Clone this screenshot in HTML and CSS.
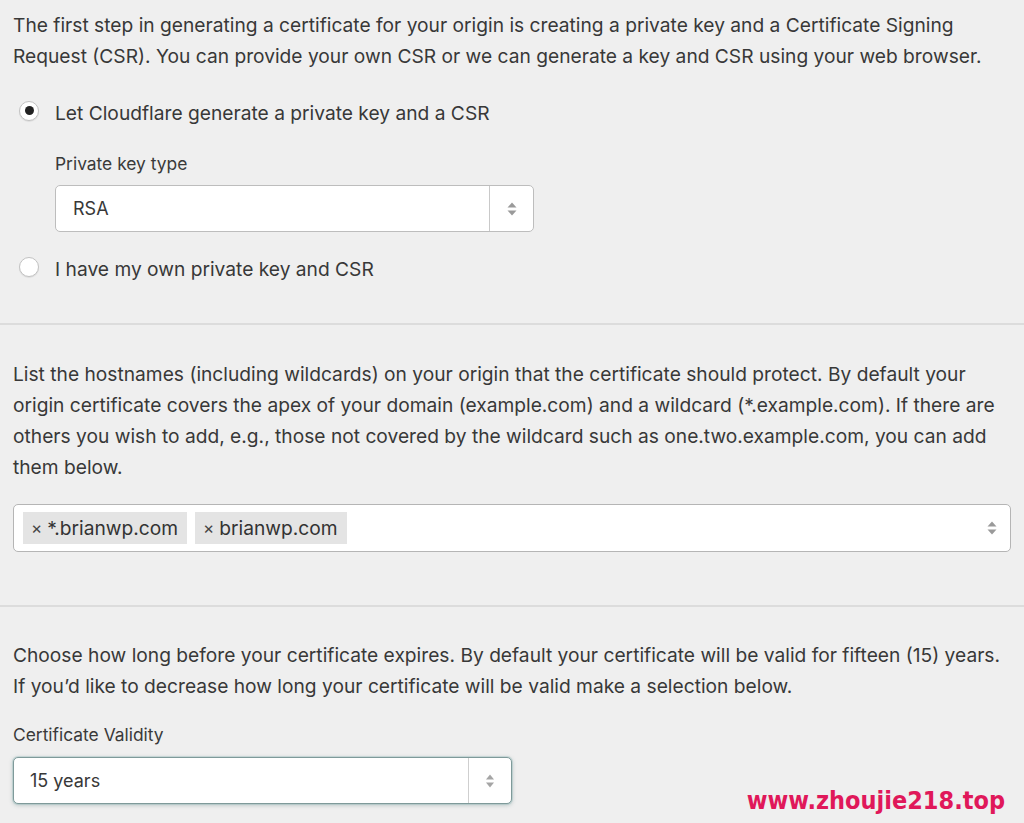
FILE: index.html
```html
<!DOCTYPE html>
<html lang="en">
<head>
<meta charset="utf-8">
<title>Origin Certificate</title>
<link rel="stylesheet" href="styles.css">
</head>
<body>
<div class="page">
  <section class="section first">
    <p class="text">The first step in generating a certificate for your origin is creating a private key and a Certificate Signing Request (CSR). You can provide your own CSR or we can generate a key and CSR using your web browser.</p>
    <div class="radio-row checked-row">
      <span class="radio checked"></span>
      <span class="radio-label">Let Cloudflare generate a private key and a CSR</span>
    </div>
    <div class="sub-field">
      <div class="label">Private key type</div>
      <div class="select key-select">
        <span class="select-value">RSA</span>
        <span class="select-arrows"><svg width="12" height="18" viewBox="0 0 12 18"><path d="M1.5 7.5 L6 2.5 L10.5 7.5 Z" fill="#9a9a9a"/><path d="M1.5 10.5 L6 15.5 L10.5 10.5 Z" fill="#9a9a9a"/></svg></span>
      </div>
    </div>
    <div class="radio-row">
      <span class="radio"></span>
      <span class="radio-label">I have my own private key and CSR</span>
    </div>
  </section>
  <section class="section second">
    <p class="text">List the hostnames (including wildcards) on your origin that the certificate should protect. By default your origin certificate covers the apex of your domain (example.com) and a wildcard (*.example.com). If there are others you wish to add, e.g., those not covered by the wildcard such as one.two.example.com, you can add them below.</p>
    <div class="tag-input">
      <div class="tags">
        <span class="tag"><span class="tag-x">×</span>*.brianwp.com</span>
        <span class="tag"><span class="tag-x">×</span>brianwp.com</span>
      </div>
      <span class="tag-arrows"><svg width="12" height="18" viewBox="0 0 12 18"><path d="M1.5 7.5 L6 2.5 L10.5 7.5 Z" fill="#9a9a9a"/><path d="M1.5 10.5 L6 15.5 L10.5 10.5 Z" fill="#9a9a9a"/></svg></span>
    </div>
  </section>
  <section class="section third">
    <p class="text">Choose how long before your certificate expires. By default your certificate will be valid for fifteen (15) years. If you’d like to decrease how long your certificate will be valid make a selection below.</p>
    <div class="label validity-label">Certificate Validity</div>
    <div class="select validity-select">
      <span class="select-value">15 years</span>
      <span class="select-arrows"><svg width="12" height="18" viewBox="0 0 12 18"><path d="M2 7.5 L6 2.5 L10 7.5 Z" fill="#a5a5a5"/><path d="M2 10.5 L6 15.5 L10 10.5 Z" fill="#a5a5a5"/></svg></span>
    </div>
  </section>
  <div class="watermark">www.zhoujie218.top</div>
</div>
</body>
</html>
```

FILE: styles.css
```css
* { box-sizing: border-box; }

html, body {
  margin: 0;
  padding: 0;
  background: #efefef;
}

body {
  font-family: Inter, "Open Sans", "Liberation Sans", sans-serif;
  color: #383838;
  width: 1024px;
  height: 823px;
  overflow: hidden;
}

.page {
  position: relative;
  height: 823px;
}

.section {
  padding: 0 13px;
}

.section + .section {
  border-top: 2px solid #dcdcdc;
}

.first {
  padding-top: 10px;
  padding-bottom: 38px;
}

.second {
  padding-top: 34px;
  padding-bottom: 53px;
}

.third {
  padding-top: 33px;
}

.text {
  margin: 0;
  font-size: 19.2px;
  line-height: 31px;
}

.radio-row {
  display: flex;
  align-items: center;
  gap: 16px;
  padding-left: 6px;
  height: 31px;
}

.checked-row {
  margin-top: 26px;
}

.radio {
  width: 20px;
  height: 20px;
  border-radius: 50%;
  background: #fff;
  border: 1px solid #c2c2c2;
  box-shadow: 0 1px 1px rgba(0,0,0,0.08);
  display: flex;
  align-items: center;
  justify-content: center;
  margin-top: -6px;
}

.radio.checked::after {
  content: "";
  width: 9px;
  height: 9px;
  border-radius: 50%;
  background: #222;
}

.radio-label {
  font-size: 19.2px;
  line-height: 31px;
}

.sub-field {
  padding-left: 42px;
  margin-top: 23px;
  margin-bottom: 22px;
}

.label {
  font-size: 17.4px;
  line-height: 24px;
  color: #3a3a3a;
}

.select {
  display: flex;
  align-items: stretch;
  background: #fff;
  border: 1px solid #bdbdbd;
  border-radius: 5px;
  height: 47px;
  margin-top: 9px;
}

.key-select {
  width: 479px;
}

.select-value {
  flex: 1;
  display: flex;
  align-items: center;
  padding-left: 17px;
  font-size: 18px;
  border-right: 1px solid #c9c9c9;
}

.select-arrows {
  width: 43px;
  display: flex;
  align-items: center;
  justify-content: center;
}

.tag-input {
  margin-top: 21px;
  height: 48px;
  background: #fff;
  border: 1px solid #b5b5b5;
  border-radius: 5px;
  display: flex;
  align-items: center;
  justify-content: space-between;
  padding: 0 12px 0 9px;
}

.tags {
  display: flex;
  gap: 8px;
}

.tag {
  background: #e4e4e4;
  height: 32px;
  display: flex;
  align-items: center;
  padding: 0 9px 0 8px;
  font-size: 19.2px;
  color: #333;
}

.tag-x {
  font-size: 17px;
  margin-right: 5px;
  color: #444;
}

.tag-arrows {
  display: flex;
  align-items: center;
}

.validity-label {
  margin-top: 21px;
}

.validity-select {
  width: 499px;
  margin-top: 10px;
  border-color: #7f9a9a;
  box-shadow: 0 0 0 1px rgba(150,190,190,0.35), 0 1px 4px rgba(60,100,100,0.35);
}

.validity-select .select-value {
  padding-left: 16px;
  border-right-color: #cfcfcf;
}

.validity-select .select-arrows {
  width: 42px;
}

.watermark {
  position: absolute;
  right: 19px;
  bottom: 8px;
  font-family: "DejaVu Sans Condensed", "DejaVu Sans", sans-serif;
  font-stretch: condensed;
  font-weight: bold;
  font-size: 25px;
  color: #e0185a;
}
```
